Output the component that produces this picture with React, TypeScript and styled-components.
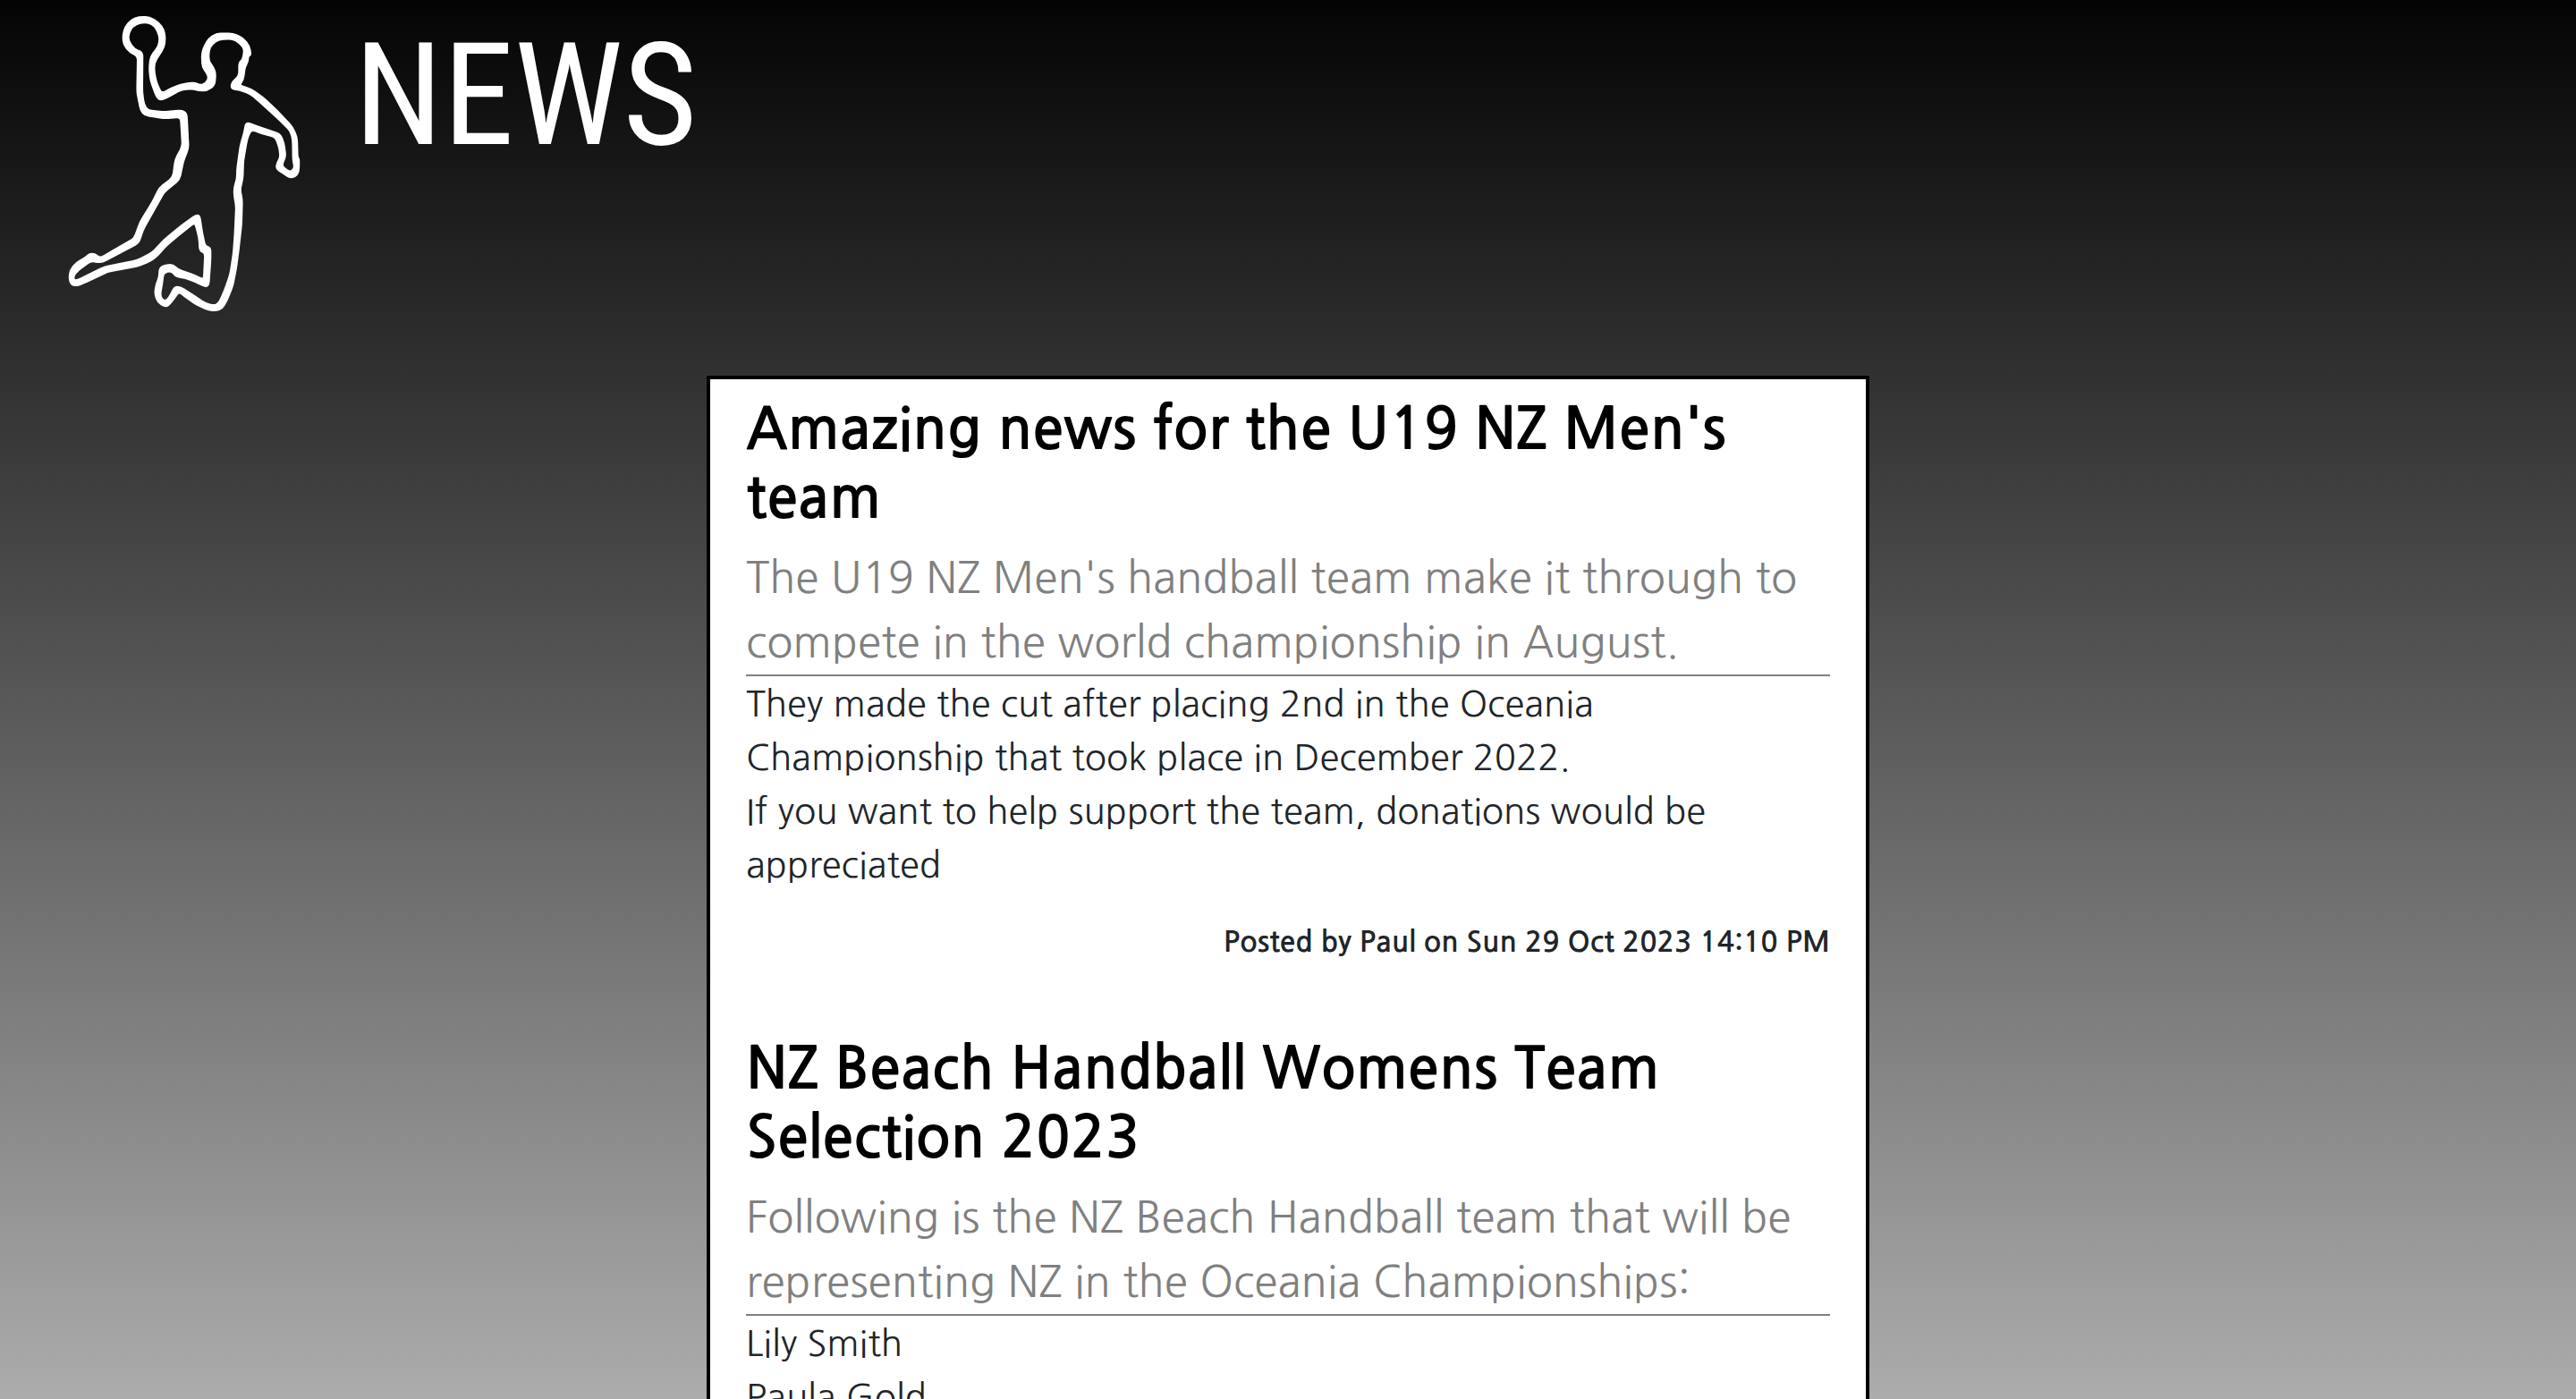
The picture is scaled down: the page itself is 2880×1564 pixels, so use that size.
import React from 'react';
import styled, { createGlobalStyle } from 'styled-components';

const GlobalStyle = createGlobalStyle`
  html {
    height: 100%;
    overflow: hidden;
  }
  body {
    margin: 0;
    height: 100%;
    background: #acacac;
    color: #212529;
    font-family: NanumGothic, "Noto Sans CJK KR", sans-serif;
    font-size: 40px;
    line-height: 60px;
  }
`;

const Page = styled.div`
  height: 100vh;
  overflow: hidden;
  background: linear-gradient(#040404, #acacac);
`;

const Header = styled.header`
  display: flex;
  align-items: flex-start;
  gap: 36px;
  padding: 0 60px;
`;

const Logo = styled.svg`
  flex: none;
  width: 300px;
  height: 360px;
`;

const PageTitle = styled.h1`
  margin: 0;
  padding-top: 11px;
  color: #fff;
  font-family: "Roboto Condensed", Roboto, sans-serif;
  font-size: 160px;
  font-weight: 400;
  line-height: 192px;
`;

const Feed = styled.main`
  box-sizing: border-box;
  display: flex;
  flex-direction: column;
  gap: 80px;
  max-width: 1300px;
  margin: 60px auto 0;
  padding: 18px 40px;
  border: 4px solid #000;
  background: #fff;
`;

const Headline = styled.h2`
  margin: 0 0 14px;
  color: #000;
  font-size: 64px;
  font-weight: 700;
  line-height: 77px;
`;

const Summary = styled.p`
  margin: 0;
  border-bottom: 2px solid #808080;
  color: #808080;
  font-size: 48px;
  line-height: 72px;
`;

const Body = styled.p`
  margin: 0;
  padding-top: 1px;
  white-space: pre-line;
`;

const Byline = styled.p`
  margin: 32px 0 0;
  font-size: 32px;
  font-weight: 700;
  line-height: 48px;
  text-align: right;
`;

const OUTER =
  '285,57 322,57 352,76 370,100 374,130 370,160 350,190 338,210 337,240 345,278 362,314 400,293 440,280 475,277 490,286 510,280 520,262 514,245 499,225 497,180 505,155 520,130 545,113 600,112 635,128 655,152 662,185 652,188 652,205 641,225 636,268 622,286 660,298 700,325 750,372 800,425 816,460 818,528 823,532 822,578 810,592 792,596 765,578 746,566 750,545 760,530 758,500 744,460 700,448 665,435 655,450 648,470 636,540 634,600 625,635 632,670 630,750 620,840 612,900 600,960 582,1005 565,1035 545,1042 520,1040 480,1022 440,995 420,978 405,1000 385,1025 372,1028 350,1015 339,985 345,950 354,930 355,900 370,890 400,887 418,905 460,918 500,936 504,930 508,848 490,842 488,800 476,752 468,750 430,780 380,822 345,860 325,876 280,893 180,912 110,945 80,958 60,956 52,935 56,905 75,882 110,862 120,851 140,852 155,866 200,840 270,800 290,745 330,680 355,630 400,595 408,535 432,490 426,393 370,397 305,386 292,370 280,310 282,188 255,175 235,150 232,120 240,90 262,65';

const INNER =
  '290,76 320,76 342,90 356,125 352,155 325,190 321,230 325,270 345,325 358,336 380,327 430,300 470,298 485,304 515,304 540,285 543,245 535,225 520,205 520,170 530,148 555,132 600,130 625,145 640,165 634,200 622,210 622,255 598,275 595,298 625,302 660,315 700,350 760,405 795,440 802,470 803,540 808,560 800,573 790,576 768,560 767,548 778,525 772,480 760,450 700,430 645,410 640,440 626,490 615,570 615,600 605,630 606,660 612,690 608,780 603,850 592,920 575,970 555,1015 540,1025 510,1018 460,985 425,962 405,962 395,985 378,1010 365,1006 357,990 364,950 368,915 395,908 410,928 440,932 475,945 510,962 520,955 526,870 526,830 508,826 498,780 490,725 480,720 430,755 370,805 330,848 280,873 170,895 80,940 68,940 66,925 80,908 125,875 150,880 165,878 285,815 300,770 345,690 370,645 422,602 435,540 452,497 446,380 430,370 370,376 315,370 303,350 297,310 298,175 270,165 250,135 252,110 265,88';

/** Turns a closed list of points into a path whose corners are softened. */
function softPath(list: string, radius: number): string {
  const pts = list.split(' ').map((p) => p.split(',').map(Number));
  const toward = (a: number[], b: number[]) => {
    const length = Math.hypot(b[0] - a[0], b[1] - a[1]);
    const t = Math.min(0.5, radius / length);
    return `${(a[0] + (b[0] - a[0]) * t).toFixed(1)},${(a[1] + (b[1] - a[1]) * t).toFixed(1)}`;
  };
  const parts = pts.map((p, i) => {
    const prev = pts[(i + pts.length - 1) % pts.length];
    const next = pts[(i + 1) % pts.length];
    return `${i === 0 ? 'M' : 'L'}${toward(p, prev)} Q${p[0]},${p[1]} ${toward(p, next)}`;
  });
  return `${parts.join(' ')} Z`;
}

const FIGURE = `${softPath(OUTER, 14)} ${softPath(INNER, 14)}`;

interface Post {
  title: string;
  summary: string;
  body: string;
  byline?: string;
}

const posts: Post[] = [
  {
    title: "Amazing news for the U19 NZ Men's team",
    summary:
      "The U19 NZ Men's handball team make it through to compete in the world championship in August.",
    body:
      'They made the cut after placing 2nd in the Oceania Championship that took place in December 2022.\nIf you want to help support the team, donations would be appreciated',
    byline: 'Posted by Paul on Sun 29 Oct 2023 14:10 PM',
  },
  {
    title: 'NZ Beach Handball Womens Team Selection 2023',
    summary:
      'Following is the NZ Beach Handball team that will be representing NZ in the Oceania Championships:',
    body: 'Lily Smith\nPaula Gold',
  },
];

export default function App() {
  return (
    <Page>
      <GlobalStyle />
      <Header>
        <Logo viewBox="0 0 900 1080" role="img" aria-label="Handball player">
          <path
            d={FIGURE}
            fill="#fff"
            fillRule="evenodd"
            stroke="#fff"
            strokeWidth="6"
            strokeLinejoin="round"
          />
        </Logo>
        <PageTitle>NEWS</PageTitle>
      </Header>
      <Feed>
        {posts.map((post) => (
          <article key={post.title}>
            <Headline>{post.title}</Headline>
            <Summary>{post.summary}</Summary>
            <Body>{post.body}</Body>
            {post.byline && <Byline>{post.byline}</Byline>}
          </article>
        ))}
      </Feed>
    </Page>
  );
}
